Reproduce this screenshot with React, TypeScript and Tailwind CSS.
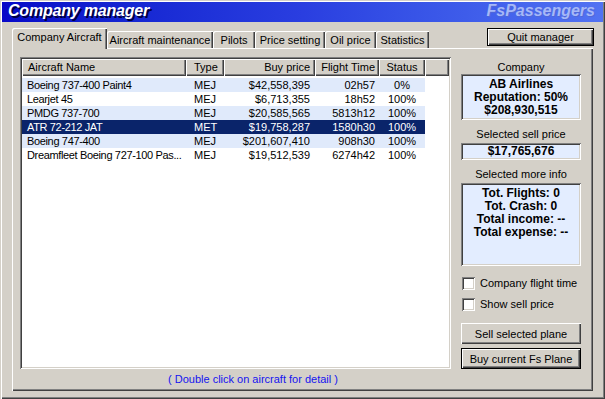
import React from "react";

const raised =
  "shadow-[inset_1px_1px_0_#ffffff,inset_-1px_-1px_0_#404040,inset_-2px_-2px_0_#808080]";
const sunken =
  "shadow-[inset_1px_1px_0_#808080,inset_-1px_-1px_0_#ffffff,inset_2px_2px_0_#404040,inset_-2px_-2px_0_#d4d0c8]";

const tabs = [
  { label: "Aircraft maintenance", w: "w-[106px]" },
  { label: "Pilots", w: "w-[42px]" },
  { label: "Price setting", w: "w-[70px]" },
  { label: "Oil price", w: "w-[51px]" },
  { label: "Statistics", w: "w-[53px]" },
];

const rows = [
  { name: "Boeing 737-400 Paint4", type: "MEJ", price: "$42,558,395", time: "02h57", status: "0%", bg: "bg-[#e0eafb]" },
  { name: "Learjet 45", type: "MEJ", price: "$6,713,355", time: "18h52", status: "100%", bg: "bg-white" },
  { name: "PMDG 737-700", type: "MEJ", price: "$20,585,565", time: "5813h12", status: "100%", bg: "bg-[#e0eafb]" },
  { name: "ATR 72-212 JAT", type: "MET", price: "$19,758,287", time: "1580h30", status: "100%", bg: "bg-[#0a246a] text-white" },
  { name: "Boeing 747-400", type: "MEJ", price: "$201,607,410", time: "908h30", status: "100%", bg: "bg-[#e0eafb]" },
  { name: "Dreamfleet Boeing 727-100 Pas...", type: "MEJ", price: "$19,512,539", time: "6274h42", status: "100%", bg: "bg-white" },
];

function Checkbox({ label, mt }: { label: string; mt: string }) {
  return (
    <div className={`flex items-center h-[13px] ${mt}`}>
      <div className={`w-[13px] h-[13px] bg-white ml-[1px] ${sunken}`} />
      <span className="ml-[5px] leading-[13px]">{label}</span>
    </div>
  );
}

export default function App() {
  return (
    <div
      className={`w-[605px] h-[399px] bg-[#d4d0c8] p-[2px] text-[11px] text-black font-['Liberation_Sans',Arial,sans-serif] shadow-[inset_1px_1px_0_#d4d0c8,inset_2px_2px_0_#ffffff,inset_-1px_-1px_0_#404040,inset_-2px_-2px_0_#808080] overflow-hidden`}
    >
      {/* Title bar */}
      <div className="h-[20px] flex items-center justify-between px-[6px] bg-gradient-to-r from-[#0808c8] via-[#2a3ee0] to-[#5272f2]">
        <span className="text-[16px] leading-[20px] font-bold italic text-white pb-[2px] tracking-[-0.2px] [text-shadow:2px_2px_0_#000040]">
          Company manager
        </span>
        <span className="text-[16px] leading-[20px] font-bold italic text-[#a6b8f7] pb-[2px] pr-[2px] [text-shadow:1px_1px_0_#5068d8]">
          FsPassengers
        </span>
      </div>

      {/* Tab row */}
      <div className="mt-[6px] h-[20px] flex items-end pl-[10px] pr-[9px]">
        <div className="flex items-end">
          <div
            className={`relative z-10 w-[95px] h-[21px] -mb-[1px] bg-[#d4d0c8] flex justify-center pt-[3px] leading-[13px] rounded-tl-[2px] shadow-[inset_1px_1px_0_#ffffff,inset_-1px_0_0_#404040,inset_-2px_0_0_#808080]`}
          >
            Company Aircraft
          </div>
          {tabs.map((t) => (
            <div
              key={t.label}
              className={`${t.w} h-[17px] flex justify-center pt-[3px] leading-[13px] rounded-tl-[2px] shadow-[inset_1px_1px_0_#ffffff,inset_-1px_0_0_#404040,inset_-2px_0_0_#808080]`}
            >
              {t.label}
            </div>
          ))}
        </div>
        <button
          className={`ml-auto self-start w-[107px] h-[18px] border border-black bg-[#d4d0c8] leading-[14px] ${raised}`}
        >
          Quit manager
        </button>
      </div>

      {/* Panel */}
      <div
        className={`ml-[10px] w-[581px] h-[343px] pl-[8px] pt-[9px] flex ${raised}`}
      >
        {/* Left part: list */}
        <div className="flex flex-col">
          <div className={`w-[431px] h-[312px] bg-white p-[2px] ${sunken}`}>
            <div className="flex h-[17px] leading-[17px] bg-[#d4d0c8]">
              <div className={`w-[164px] pl-[6px] ${raised}`}>Aircraft Name</div>
              <div className={`w-[38px] pl-[8px] ${raised}`}>Type</div>
              <div className={`w-[91px] pr-[5px] text-right ${raised}`}>Buy price</div>
              <div className={`w-[64px] pr-[4px] text-right ${raised}`}>Flight Time</div>
              <div className={`w-[46px] text-center ${raised}`}>Status</div>
              <div className={`flex-1 ${raised}`} />
            </div>
            <div className="pt-[2px]">
              {rows.map((r) => (
                <div key={r.name} className={`flex w-[403px] h-[14px] leading-[14px] ${r.bg}`}>
                  <div className="w-[164px] pl-[5px] whitespace-nowrap tracking-[-0.35px]">{r.name}</div>
                  <div className="w-[38px] pl-[8px]">{r.type}</div>
                  <div className="w-[91px] pr-[5px] text-right">{r.price}</div>
                  <div className="w-[64px] pr-[4px] text-right">{r.time}</div>
                  <div className="w-[46px] text-center">{r.status}</div>
                </div>
              ))}
            </div>
          </div>
          <div className="mt-[4px] pl-[148px] leading-[13px] text-[#1414f0]">
            ( Double click on aircraft for detail )
          </div>
        </div>

        {/* Right column */}
        <div className="ml-[10px] w-[120px] flex flex-col">
          <div className="mt-[4px] h-[13px] leading-[13px] text-center">Company</div>
          <div
            className={`h-[46px] bg-[#e3edff] flex flex-col justify-center items-center text-[12px] font-bold leading-[13px] ${sunken}`}
          >
            <div>AB Airlines</div>
            <div>Reputation: 50%</div>
            <div>$208,930,515</div>
          </div>
          <div className="mt-[8px] h-[13px] leading-[13px] text-center">Selected sell price</div>
          <div
            className={`mt-[2px] h-[17px] bg-[#e3edff] flex items-center justify-center text-[12px] font-bold leading-[13px] ${sunken}`}
          >
            $17,765,676
          </div>
          <div className="mt-[8px] h-[13px] leading-[13px] text-center">Selected more info</div>
          <div
            className={`mt-[2px] h-[83px] bg-[#e3edff] flex flex-col items-center pt-[4px] text-[12px] font-bold leading-[13px] ${sunken}`}
          >
            <div>Tot. Flights: 0</div>
            <div>Tot. Crash: 0</div>
            <div>Total income: --</div>
            <div>Total expense: --</div>
          </div>
          <Checkbox label="Company flight time" mt="mt-[11px]" />
          <Checkbox label="Show sell price" mt="mt-[8px]" />
          <button className={`mt-[12px] h-[21px] w-full bg-[#d4d0c8] leading-[14px] ${raised}`}>
            Sell selected plane
          </button>
          <button
            className={`mt-[4px] h-[21px] w-full border border-black bg-[#d4d0c8] leading-[14px] ${raised}`}
          >
            Buy current Fs Plane
          </button>
        </div>
      </div>
    </div>
  );
}
